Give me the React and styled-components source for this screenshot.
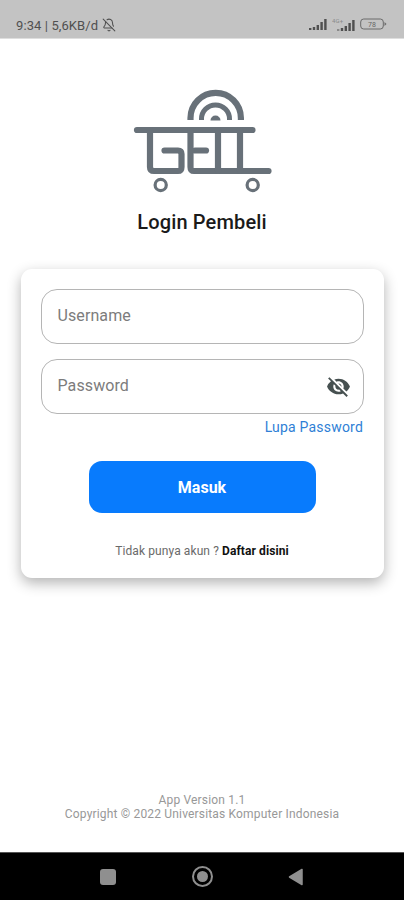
import React from "react";
import styled, { createGlobalStyle } from "styled-components";
import { MdVisibilityOff } from "react-icons/md";
import { BellOff } from "lucide-react";

const Global = createGlobalStyle`
  html, body { margin: 0; padding: 0; background: #fff; }
  * { box-sizing: border-box; }
  body { font-family: Roboto, "Liberation Sans", sans-serif; }
`;

const Screen = styled.div`
  width: 404px;
  height: 900px;
  display: flex;
  flex-direction: column;
  overflow: hidden;
  background: #fff;
`;

const StatusBar = styled.div`
  height: 39px;
  flex: none;
  background: #c3c3c3;
  display: flex;
  align-items: center;
  justify-content: space-between;
  padding: 12px 17px 0 16px;
  color: #505050;
  font-size: 13px;
  letter-spacing: 0.1px;
  border-bottom: 1px solid #dedede;
`;

const StatusLeft = styled.div`
  display: flex;
  align-items: center;
  gap: 4px;
`;

const StatusRight = styled.div`
  display: flex;
  align-items: center;
  gap: 5px;
  padding-bottom: 2px;
`;

const Main = styled.main`
  flex: 1;
  display: flex;
  flex-direction: column;
  align-items: center;
  padding-top: 50px;
`;

const Logo = styled.svg`
  width: 146px;
  height: 108px;
  display: block;
  margin-left: 1px;
`;

const Title = styled.h1`
  margin: 13px 0 0;
  height: 24px;
  font-size: 20px;
  line-height: 24px;
  font-weight: 500;
  letter-spacing: 0.15px;
  color: #1a1a1a;
`;

const Card = styled.section`
  width: 363px;
  height: 309px;
  margin-top: 35px;
  padding: 20px 20px 0;
  background: #fff;
  border-radius: 11px;
  box-shadow: 0 5px 14px rgba(0, 0, 0, 0.3);
  display: flex;
  flex-direction: column;
`;

const Field = styled.label`
  height: 55px;
  flex: none;
  display: flex;
  align-items: center;
  margin-bottom: ${(p) => p.$gap}px;
  padding: 0 12px 0 16px;
  border: 1px solid #b5b5b5;
  border-radius: 16px;
  background: #fff;
`;

const Input = styled.input`
  flex: 1;
  min-width: 0;
  height: 100%;
  padding: 0 0 3px;
  border: 0;
  outline: 0;
  background: transparent;
  font: 400 16px Roboto, sans-serif;
  letter-spacing: 0.1px;
  color: #333;
  &::placeholder { color: #7c7c7c; opacity: 1; }
`;

const EyeIcon = styled(MdVisibilityOff)`
  width: 25px;
  height: 25px;
  color: #465050;
  flex: none;
`;

const Forgot = styled.a`
  align-self: flex-end;
  margin: 5px 0.5px 0 0;
  font-size: 14px;
  line-height: 17px;
  letter-spacing: 0.2px;
  color: #2f7fd6;
`;

const Submit = styled.button`
  align-self: center;
  width: 227px;
  height: 52px;
  margin-top: 25px;
  border: 0;
  border-radius: 13px;
  background: #087bfd;
  color: #fff;
  font: 700 16px Roboto, sans-serif;
`;

const SignUp = styled.p`
  margin: 30px 0 0;
  text-align: center;
  font-size: 12px;
  line-height: 16px;
  letter-spacing: 0.1px;
  color: #6a6a6a;
  strong { font-weight: 700; color: #111; }
`;

const Footer = styled.footer`
  margin-top: auto;
  padding-bottom: 31px;
  text-align: center;
  font-size: 12px;
  line-height: 14px;
  letter-spacing: 0.17px;
  color: #989898;
`;

const NavBar = styled.nav`
  height: 48px;
  flex: none;
  background: #000;
  border-top: 1px solid #555;
  display: grid;
  grid-template-columns: repeat(3, 94px);
  justify-content: center;
  align-items: center;
  justify-items: center;
`;

const NavSquare = styled.span`
  width: 16px;
  height: 16px;
  border-radius: 3px;
  background: #8f8f8f;
`;

const NavCircle = styled.span`
  width: 21px;
  height: 21px;
  border-radius: 50%;
  border: 2px solid #8f8f8f;
  display: flex;
  align-items: center;
  justify-content: center;
  &::after {
    content: "";
    width: 11px;
    height: 11px;
    border-radius: 50%;
    background: #8f8f8f;
  }
`;

const NavBack = styled.svg`
  width: 16px;
  height: 18px;
  display: block;
`;

const Signal = () => (
  <svg width="18" height="11" viewBox="0 0 18 11" fill="#505050">
    {[2, 3, 5, 8, 11].map((h, i) => (
      <rect key={i} x={i * 3.8} y={11 - h} width="2.4" height={h} />
    ))}
  </svg>
);

const Signal4G = () => (
  <svg width="23" height="13" viewBox="0 0 23 13" fill="#505050">
    <text x="0" y="5" fontSize="6" fontFamily="Roboto" fill="#8a8a8a">4G+</text>
    {[2, 3, 5, 8, 11].map((h, i) => (
      <rect key={i} x={5 + i * 3.8} y={13 - h} width="2.4" height={h} opacity={i === 0 ? 0.5 : 1} />
    ))}
  </svg>
);

const Battery = () => (
  <svg width="27" height="12" viewBox="0 0 27 12" fill="none">
    <rect x="0.7" y="1" width="22.6" height="10" rx="3" stroke="#6a6a6a" />
    <path d="M24.5 4 L26.5 6 L24.5 8 Z" fill="#6a6a6a" />
    <text x="12" y="8.6" textAnchor="middle" fontSize="7" fill="#666" fontFamily="Roboto">78</text>
  </svg>
);

const GeilLogo = () => (
  <Logo viewBox="130 89 146 108" fill="none" stroke="#687179" strokeWidth="6.2" strokeLinecap="round" strokeLinejoin="round">
    <path d="M190.5 120 V118 A25.2 25.2 0 0 1 240.9 118 V120" strokeWidth="6.2" strokeLinecap="butt" />
    <path d="M201.5 120 V119 A14 14 0 0 1 229.5 119 V120" strokeWidth="5" strokeLinecap="butt" />
    <path d="M210.5 120.5 A5 5 0 0 1 220.5 120.5 Z" fill="#687179" stroke="none" />
    <path d="M137 130 H252.5" />
    <path d="M150 130 V167 Q150 171 154 171 H178 Q181.5 171 181.5 167 V154 Q181.5 150.5 178 150.5 H164.5" />
    <path d="M190.5 130 V167 Q190.5 171 194 171 H268.5" />
    <path d="M195 150.5 H206" />
    <path d="M218 130 V171" />
    <path d="M240 130 V171" />
    <circle cx="160.7" cy="185" r="5.6" strokeWidth="3.2" />
    <circle cx="252.7" cy="185" r="5.6" strokeWidth="3.2" />
  </Logo>
);

export default function App() {
  return (
    <>
      <Global />
      <Screen>
        <StatusBar>
          <StatusLeft>
            <span>9:34 | 5,6KB/d</span>
            <BellOff size={14} strokeWidth={1.8} />
          </StatusLeft>
          <StatusRight>
            <Signal />
            <Signal4G />
            <Battery />
          </StatusRight>
        </StatusBar>
        <Main>
          <GeilLogo />
          <Title>Login Pembeli</Title>
          <Card>
            <Field $gap={15}>
              <Input placeholder="Username" />
            </Field>
            <Field $gap={0}>
              <Input placeholder="Password" type="password" />
              <EyeIcon />
            </Field>
            <Forgot>Lupa Password</Forgot>
            <Submit>Masuk</Submit>
            <SignUp>
              Tidak punya akun ? <strong>Daftar disini</strong>
            </SignUp>
          </Card>
          <Footer>
            App Version 1.1
            <br />
            Copyright © 2022 Universitas Komputer Indonesia
          </Footer>
        </Main>
        <NavBar>
          <NavSquare />
          <NavCircle />
          <NavBack viewBox="0 0 16 18">
            <path d="M14 1.5 V16.5 L1.5 9 Z" fill="#8f8f8f" stroke="#8f8f8f" strokeWidth="1.5" strokeLinejoin="round" />
          </NavBack>
        </NavBar>
      </Screen>
    </>
  );
}
